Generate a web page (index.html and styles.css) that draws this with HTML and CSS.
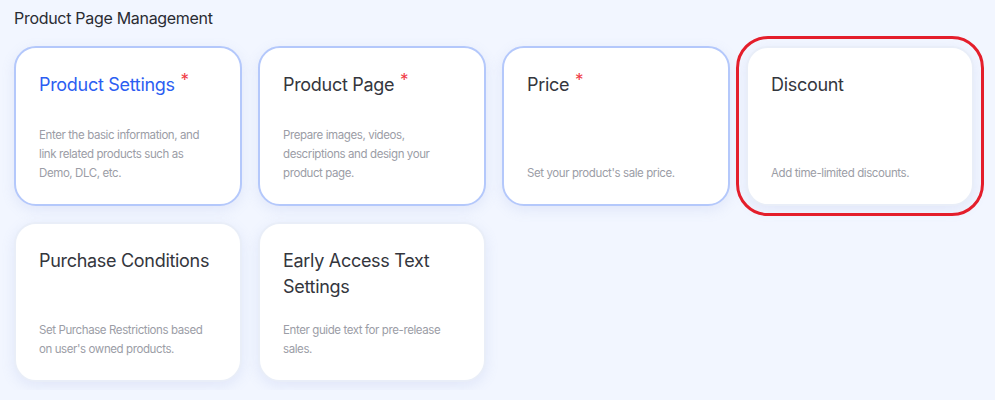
FILE: index.html
```html
<!DOCTYPE html>
<html lang="en">
<head>
    <meta charset="UTF-8">
    <meta name="viewport" content="width=device-width, initial-scale=1.0">
    <title>Product Page Management</title>
    <link rel="stylesheet" href="styles.css">
</head>
<body>
    <h2 class="section-title">Product Page Management</h2>

    <div class="card-grid">
        <div class="card card-required card-active">
            <div class="card-title">Product Settings <span class="req">*</span></div>
            <div class="card-desc">Enter the basic information, and link related products such as Demo, DLC, etc.</div>
        </div>
        <div class="card card-required">
            <div class="card-title">Product Page <span class="req">*</span></div>
            <div class="card-desc">Prepare images, videos, descriptions and design your product page.</div>
        </div>
        <div class="card card-required">
            <div class="card-title">Price <span class="req">*</span></div>
            <div class="card-desc">Set your product's sale price.</div>
        </div>
        <div class="card card-highlight">
            <div class="card-title">Discount</div>
            <div class="card-desc">Add time-limited discounts.</div>
        </div>
        <div class="card">
            <div class="card-title">Purchase Conditions</div>
            <div class="card-desc">Set Purchase Restrictions based on user's owned products.</div>
        </div>
        <div class="card">
            <div class="card-title">Early Access Text Settings</div>
            <div class="card-desc">Enter guide text for pre-release sales.</div>
        </div>
    </div>
</body>
</html>
```

FILE: styles.css
```css
body {
    font-family: Inter, "Noto Sans", sans-serif;
    margin: 0;
    padding: 8px 14px;
    background-color: #f2f6ff;
}
.section-title {
    font-size: 16px;
    font-weight: 400;
    line-height: 20px;
    color: #2a2c33;
    margin: 0 0 18px 0;
    letter-spacing: -0.3px;
}
.card-grid {
    display: grid;
    grid-template-columns: repeat(4, 228px);
    grid-auto-rows: 160px;
    gap: 16px;
}
.card {
    box-sizing: border-box;
    display: flex;
    flex-direction: column;
    justify-content: space-between;
    background-color: #fff;
    border: 2px solid #e9eef8;
    border-radius: 22px;
    padding: 24px 23px 21px;
    box-shadow: 0 4px 14px rgba(120, 145, 210, 0.14);
}
.card-required {
    border-color: #b4c8fb;
}
.card-highlight {
    outline: 3px solid #e41e2b;
    outline-offset: 7px;
}
.card-title {
    font-size: 18px;
    font-weight: 400;
    line-height: 26px;
    color: #34363d;
    letter-spacing: -0.3px;
}
.card-active .card-title {
    color: #2c5ef2;
}
.req {
    color: #f03a45;
    font-size: 17px;
    vertical-align: 5px;
    line-height: 0;
    margin-left: 1px;
}
.card-desc {
    font-size: 11.5px;
    line-height: 19px;
    color: #9b9da6;
    letter-spacing: -0.4px;
}
```
